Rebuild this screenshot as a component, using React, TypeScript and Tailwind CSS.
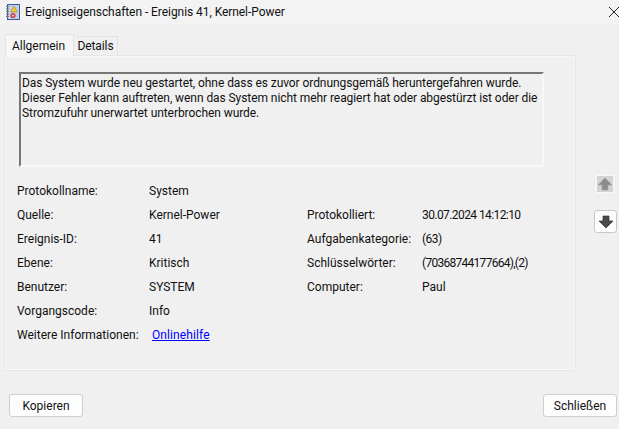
import React from "react";

const F = "font-['Roboto','Noto_Sans',sans-serif]";

function Row({ a, b, c, d, dClass }: { a: string; b: React.ReactNode; c?: string; d?: string; dClass?: string }) {
  return (
    <div className="grid h-6 grid-cols-[132px_158px_115px_1fr] items-center">
      <span>{a}</span>
      <span>{b}</span>
      <span>{c}</span>
      <span className={dClass}>{d}</span>
    </div>
  );
}

function Arrow({ up }: { up?: boolean }) {
  return (
    <svg width="16" height="16" viewBox="0 0 16 16" className={up ? "" : "rotate-180"}>
      <path d="M8 2 L15 9 H11 V14 H5 V9 H1 Z" fill={up ? "#8c8c8c" : "#4a4a4a"} stroke={up ? "#a0a0a0" : "#333"} strokeWidth="0.7" />
    </svg>
  );
}

export default function App() {
  return (
    <div className={`${F} relative flex h-[429px] w-[619px] flex-col overflow-hidden bg-[#f0f0f0] text-[12px] text-[#111]`}>
      <div className="flex h-6 items-center bg-[#f3f3f3] pl-[5px]">
        <svg width="15" height="16" viewBox="0 0 15 16">
          <rect x="2.5" y="0.5" width="12" height="15" fill="#c4d0ea" stroke="#3f5a94" />
          <path d="M1 2.5h3M1 5h3M1 7.5h3M1 10h3M1 12.5h3" stroke="#777" strokeWidth="1" />
          <path d="M9 2 L12.5 8 H5.5 Z" fill="#f2c92e" stroke="#9a7a18" strokeWidth="0.5" />
          <circle cx="8" cy="11.5" r="2.6" fill="#d0404c" />
          <circle cx="8" cy="11.5" r="0.9" fill="#f3d8d8" />
        </svg>
        <span className="ml-[5px] tracking-[-0.06px]">Ereigniseigenschaften - Ereignis 41, Kernel-Power</span>
        <svg width="10" height="10" viewBox="0 0 10 10" className="ml-auto">
          <path d="M0 0 L10 10 M10 0 L0 10" stroke="#222" strokeWidth="1" />
        </svg>
      </div>

      <div className="flex h-[31px] items-end pl-[5px] pt-[10px]">
        <div className="z-10 -mb-px flex h-[22px] w-[69px] items-center justify-center border border-b-0 border-[#e3e3e3] bg-[#f6f6f6] pr-[2px]">Allgemein</div>
        <div className="flex h-[19px] w-[44px] items-center justify-center border border-b-0 border-l-0 border-[#e3e3e3] bg-[#f0f0f0] tracking-[-0.1px]">Details</div>
      </div>

      <div className="flex">
        <div className="ml-[4px] h-[316px] w-[572px] border-2 border-[#e6e6e6] pl-[13px] pt-[15px] outline outline-1 outline-[#f6f6f6] -outline-offset-2">
          <div className="h-[95px] w-[525px] whitespace-nowrap border-2 border-b-[#f8f8f8] border-l-[#767676] border-r-[#f8f8f8] border-t-[#767676] px-[1px] pt-[2px] leading-[15px] tracking-[-0.07px]">
            Das System wurde neu gestartet, ohne dass es zuvor ordnungsgemäß heruntergefahren wurde.
            <br />
            Dieser Fehler kann auftreten, wenn das System nicht mehr reagiert hat oder abgestürzt ist oder die
            <br />
            Stromzufuhr unerwartet unterbrochen wurde.
          </div>
          <div className="mt-3 -ml-[2px]">
            <Row a="Protokollname:" b="System" />
            <Row a="Quelle:" b="Kernel-Power" c="Protokolliert:" d="30.07.2024 14:12:10" dClass="tracking-[-0.58px]" />
            <Row a="Ereignis-ID:" b="41" c="Aufgabenkategorie:" d="(63)" dClass="tracking-[-0.5px]" />
            <Row a="Ebene:" b="Kritisch" c="Schlüsselwörter:" d="(70368744177664),(2)" dClass="tracking-[-0.72px]" />
            <Row a="Benutzer:" b="SYSTEM" c="Computer:" d="Paul" />
            <Row a="Vorgangscode:" b="Info" />
            <div className="flex h-6 items-center">
              <span className="w-[135px]">Weitere Informationen:</span>
              <a className="text-[#0000ff] underline tracking-[0.1px]">Onlinehilfe</a>
            </div>
          </div>
        </div>

        <div className="ml-[18px] flex flex-col gap-[15px] pt-[118px]">
          <div className="flex h-[22px] w-[22px] items-center justify-center rounded-[3px] border border-[#ececec] bg-[#f6f6f6]">
            <span className="flex h-4 w-4 items-center justify-center bg-[#d4d4d4]"><Arrow up /></span>
          </div>
          <div className="flex h-[23px] w-[23px] items-center justify-center rounded-[3px] border border-[#c8c8c8] bg-[#fdfdfd]">
            <Arrow />
          </div>
        </div>
      </div>

      <div className="flex justify-between pl-[9px] pr-[2px] pt-[23px]">
        <button className="h-[23px] w-[74px] rounded-[3px] border border-[#cfcfcf] bg-[#fdfdfd]">Kopieren</button>
        <button className="h-[23px] w-[74px] rounded-[3px] border border-[#cfcfcf] bg-[#fdfdfd]">Schließen</button>
      </div>
    </div>
  );
}
